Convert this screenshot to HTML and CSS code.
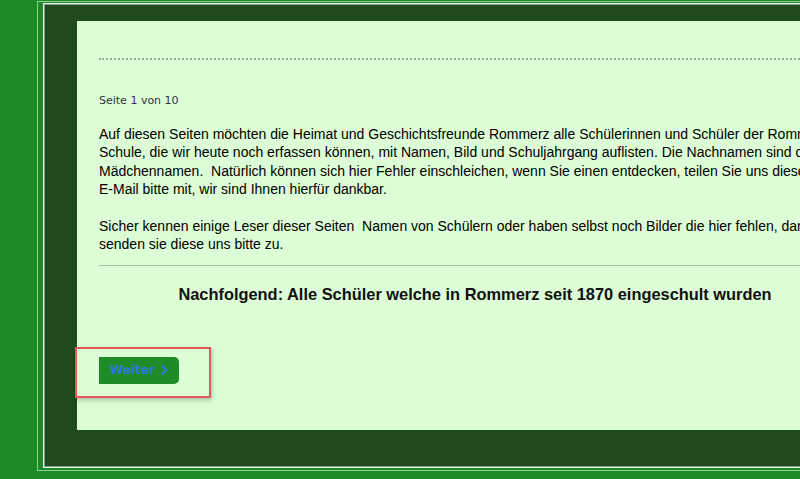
FILE: index.html
```html
<!DOCTYPE html>
<html lang="de">
<head>
	<meta charset="utf-8">
	<title>Schüler Rommerz</title>
	<link rel="stylesheet" href="styles.css">
</head>
<body>
<div class="page">
	<div class="frame">
		<div class="content">
			<hr class="dotted">
			<div class="pager">Seite 1 von 10</div>
			<p class="intro">
				Auf diesen Seiten möchten die Heimat und Geschichtsfreunde Rommerz alle Schülerinnen und Schüler der Rommerzer<br>
				Schule, die wir heute noch erfassen können, mit Namen, Bild und Schuljahrgang auflisten. Die Nachnamen sind die<br>
				Mädchennamen.&nbsp; Natürlich können sich hier Fehler einschleichen, wenn Sie einen entdecken, teilen Sie uns diese per<br>
				E-Mail bitte mit, wir sind Ihnen hierfür dankbar.
			</p>
			<p class="intro">
				Sicher kennen einige Leser dieser Seiten&nbsp; Namen von Schülern oder haben selbst noch Bilder die hier fehlen, dann<br>
				senden sie diese uns bitte zu.
			</p>
			<hr class="solid">
			<h2>Nachfolgend: Alle Schüler welche in Rommerz seit 1870 eingeschult wurden</h2>
			<div class="nav">
				<a class="next" href="#">
					Weiter
					<svg width="8" height="12" viewBox="0 0 8 12"><path d="M1.5 1.5 L6 6 L1.5 10.5" fill="none" stroke="#2b7ad8" stroke-width="2.4" stroke-linecap="round" stroke-linejoin="round"/></svg>
				</a>
				<div class="mark"></div>
			</div>
		</div>
	</div>
</div>
</body>
</html>
```

FILE: styles.css
```css
body {
	margin: 0;
	background: #1b8a27;
	overflow: hidden;
	height: 479px;
	font-family: "Liberation Sans", Arial, sans-serif;
}

.page {
	margin: 1px 0 0 37px;
	width: 880px;
	border-top: 1px solid #8fd094;
	border-left: 1px solid #8fd094;
	border-bottom: 1px solid #8fd094;
	padding: 1px 0 2px 5px;
}

.frame {
	background: #1f4a1f;
	border: 1px solid #e4f3e4;
	box-shadow: inset 0 0 0 1px #8c9a8c;
	padding: 17px 0 37px 33px;
}

.content {
	background: #dcfdd5;
	height: 409px;
	padding: 0 22px;
	width: 748px;
}

hr {
	margin: 0;
	border: none;
}

hr.dotted {
	padding-top: 37px;
	border-bottom: 2px dotted #9aaa9a;
}

.pager {
	margin-top: 33px;
	font-family: "DejaVu Sans", Verdana, sans-serif;
	font-size: 11px;
	line-height: 15px;
	color: #333;
}

.intro {
	margin: 17px 0 0;
	font-size: 14px;
	line-height: 18.4px;
	color: #000;
}

.intro + .intro {
	margin-top: 18.4px;
}

hr.solid {
	margin-top: 11px;
	border-top: 1px solid #a8bca8;
}

h2 {
	margin: 18px 0 0;
	padding-left: 4px;
	text-align: center;
	font-size: 16.4px;
	line-height: 20px;
	color: #111;
}

.nav {
	position: relative;
	margin-top: 53px;
	width: 80px;
}

.next {
	display: flex;
	align-items: center;
	gap: 6px;
	height: 27px;
	padding: 0 11px;
	background: #1e8a28;
	border-radius: 0 5px 5px 0;
	color: #2b7ad8;
	font-family: "DejaVu Sans", Verdana, sans-serif;
	font-weight: bold;
	font-size: 12px;
	text-decoration: none;
}

.mark {
	position: absolute;
	left: -24px;
	top: -10px;
	width: 132px;
	height: 47px;
	border: 2px solid #e25a5a;
	box-shadow: 1px 2px 4px rgba(0, 0, 0, 0.25);
}
```
